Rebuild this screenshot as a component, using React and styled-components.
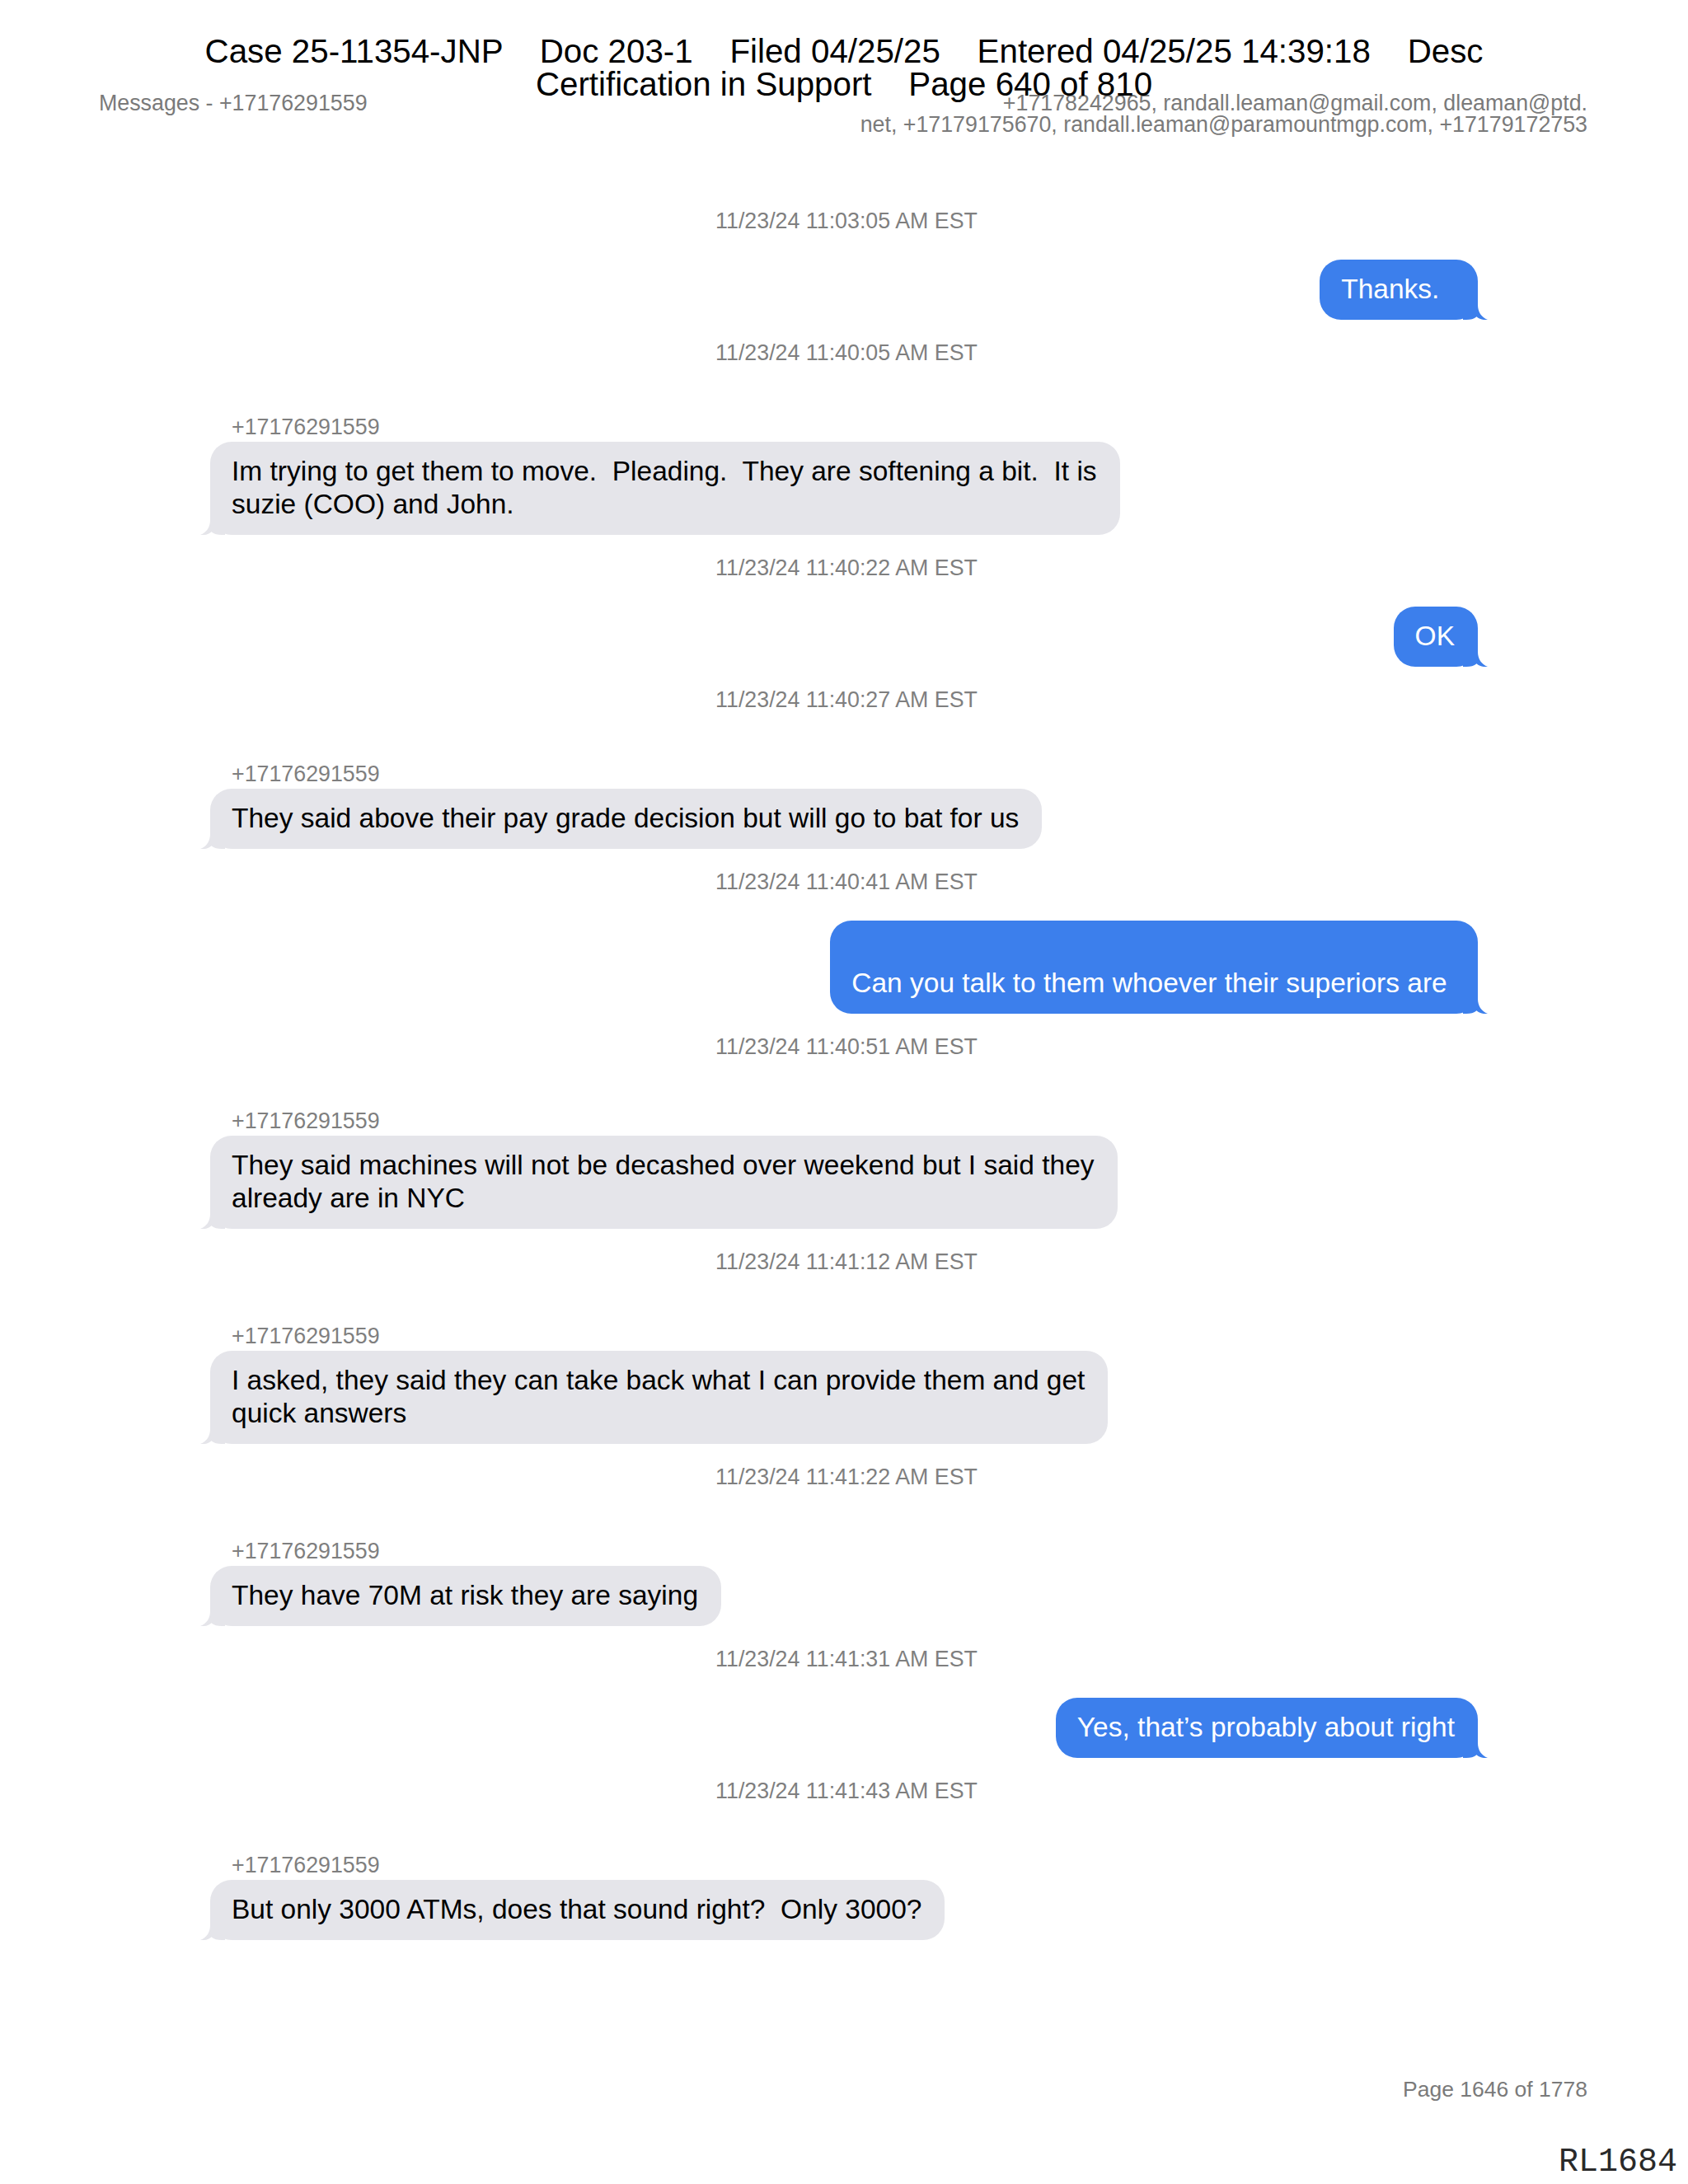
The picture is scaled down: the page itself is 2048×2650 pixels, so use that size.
import React from 'react'
import styled, { createGlobalStyle } from 'styled-components'

const GlobalStyle = createGlobalStyle`
  html, body {
    margin: 0;
    padding: 0;
    background: #ffffff;
  }
  body {
    font-family: "Liberation Sans", Arial, sans-serif;
    color: #000;
  }
`;

const Page = styled.div`
  position: relative;
  width: 2048px;
  min-height: 2650px;
  display: flex;
  flex-direction: column;
  box-sizing: border-box;
  padding-bottom: 4px;
`;

// court filing stamp, printed over the page content
const Stamp = styled.div`
  position: absolute;
  top: 42.5px;
  left: 0;
  right: 0;
  text-align: center;
  font-size: 40.3px;
  line-height: 40px;
  white-space: pre;
  color: #000;
`;

const HeaderRow = styled.div`
  display: flex;
  justify-content: space-between;
  align-items: flex-start;
  padding: 111px 122px 0 120px;
  font-size: 26.8px;
  color: #7a7a7a;
`;

const Title = styled.div`
  margin-top: 1px;
  line-height: 27px;
`;

const Participants = styled.div`
  margin-top: 1px;
  text-align: right;
  line-height: 26px;
`;

const Thread = styled.div`
  display: flex;
  flex-direction: column;
  margin-left: 255px;
  width: 1538px;
  padding-top: 64px;
`;

const TimeStamp = styled.div`
  margin-top: 25px;
  padding-left: 6px;
  text-align: center;
  font-size: 26.8px;
  line-height: 30px;
  color: #7f7f7f;
`;

const Sender = styled.div`
  margin-top: 60px;
  padding-left: 26px;
  font-size: 26.8px;
  line-height: 30px;
  color: #7f7f7f;
`;

const Bubble = styled.div`
  position: relative;
  align-self: ${p => (p.$out ? 'flex-end' : 'flex-start')};
  margin-top: ${p => (p.$out ? '32px' : '3px')};
  padding: 16px 28px 17px 26px;
  border-radius: 26px;
  background: ${p => (p.$out ? '#3c7fec' : '#e5e5ea')};
  color: ${p => (p.$out ? '#ffffff' : '#000000')};
  font-size: 33.5px;
  line-height: 40px;
  white-space: pre;
`;

const TailSvg = styled.svg`
  position: absolute;
  bottom: 0;
  ${p => (p.$out ? 'right: -12px;' : 'left: -12px; transform: scaleX(-1);')}
  width: 30px;
  height: 30px;
  display: block;
`;

const Footer = styled.div`
  margin-top: auto;
  display: flex;
  flex-direction: column;
  align-items: flex-end;
`;

const PageNum = styled.div`
  margin-right: 122px;
  font-size: 26.5px;
  line-height: 30px;
  color: #7a7a7a;
`;

const Bates = styled.div`
  margin-top: 52px;
  margin-right: 13px;
  font-family: "Liberation Mono", "Courier New", monospace;
  font-size: 40px;
  line-height: 44px;
  color: #2a2a2a;
`;

const Tail = ({ out }) => (
  <TailSvg $out={out} viewBox="0 0 30 30">
    <path
      d="M0 0 H18 V12 C18 20 22 27 30 30 C25 30.6 20 29.4 16.5 26.2 C13.5 29 9 30 4 30 H0 Z"
      fill={out ? '#3c7fec' : '#e5e5ea'}
    />
  </TailSvg>
)

const PHONE = '+17176291559'

const messages = [
  { time: '11/23/24 11:03:05 AM EST', out: true, text: 'Thanks.  ' },
  { time: '11/23/24 11:40:05 AM EST', text: 'Im trying to get them to move.  Pleading.  They are softening a bit.  It is\nsuzie (COO) and John.' },
  { time: '11/23/24 11:40:22 AM EST', out: true, text: 'OK' },
  { time: '11/23/24 11:40:27 AM EST', text: 'They said above their pay grade decision but will go to bat for us' },
  { time: '11/23/24 11:40:41 AM EST', out: true, text: '\nCan you talk to them whoever their superiors are ' },
  { time: '11/23/24 11:40:51 AM EST', text: 'They said machines will not be decashed over weekend but I said they\nalready are in NYC' },
  { time: '11/23/24 11:41:12 AM EST', text: 'I asked, they said they can take back what I can provide them and get\nquick answers' },
  { time: '11/23/24 11:41:22 AM EST', text: 'They have 70M at risk they are saying' },
  { time: '11/23/24 11:41:31 AM EST', out: true, text: 'Yes, that\u2019s probably about right' },
  { time: '11/23/24 11:41:43 AM EST', text: 'But only 3000 ATMs, does that sound right?  Only 3000?' },
]

const App = () => {
  return (
    <>
      <GlobalStyle />
      <Page>
        <HeaderRow>
          <Title>Messages - {PHONE}</Title>
          <Participants>
            +17178242965, randall.leaman@gmail.com, dleaman@ptd.
            <br />
            net, +17179175670, randall.leaman@paramountmgp.com, +17179172753
          </Participants>
        </HeaderRow>

        <Thread>
          {messages.map((m, i) => (
            <React.Fragment key={i}>
              <TimeStamp>{m.time}</TimeStamp>
              {!m.out && <Sender>{PHONE}</Sender>}
              <Bubble $out={m.out}>
                {m.text}
                <Tail out={m.out} />
              </Bubble>
            </React.Fragment>
          ))}
        </Thread>

        <Footer>
          <PageNum>Page 1646 of 1778</PageNum>
          <Bates>RL1684</Bates>
        </Footer>

        <Stamp>
          {'Case 25-11354-JNP    Doc 203-1    Filed 04/25/25    Entered 04/25/25 14:39:18    Desc\nCertification in Support    Page 640 of 810'}
        </Stamp>
      </Page>
    </>
  )
}

export default App
